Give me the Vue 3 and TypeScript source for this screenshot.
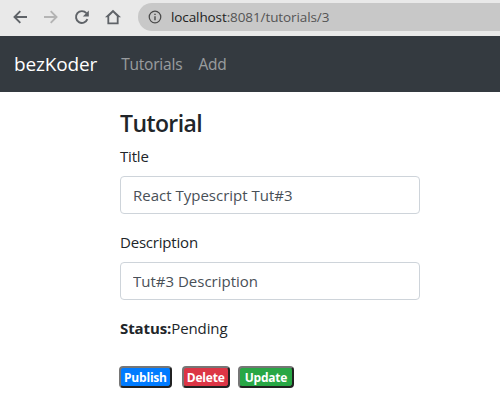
<script setup lang="ts">
const title: string = "React Typescript Tut#3";
const description: string = "Tut#3 Description";
</script>

<template>
  <div class="page">
    <div class="chrome">
      <div class="tools">
        <svg class="ico" viewBox="0 0 16 16"><path d="M15 8H2.5M8.3 2.2 2.5 8l5.8 5.8" fill="none" stroke="#5f6368" stroke-width="1.9" /></svg>
        <svg class="ico" viewBox="0 0 16 16"><path d="M1 8h12.5M7.7 2.2 13.5 8l-5.8 5.8" fill="none" stroke="#b4b4b4" stroke-width="1.9" /></svg>
        <svg class="ico" viewBox="0 0 16 16"><path d="M13.4 10.2A5.9 5.9 0 1 1 12.4 4.2" fill="none" stroke="#5f6368" stroke-width="1.9" /><path d="M14.8 1.4v6H8.8z" fill="#5f6368" /></svg>
        <svg class="ico" viewBox="0 0 16 16"><path d="M8 .8 0 8.2h2.4v7h11.2v-7H16zM4.2 13.4V7.2L8 3.6l3.8 3.6v6.2z" fill="#5f6368" fill-rule="evenodd" /></svg>
      </div>
      <div class="omni">
        <svg class="info" viewBox="0 0 16 16"><circle cx="8" cy="8" r="6.6" fill="none" stroke="#4a4a4a" stroke-width="1.4" /><path d="M7.2 7h1.6v4.8H7.2zM7.2 4.2h1.6v1.6H7.2z" fill="#4a4a4a" /></svg>
        <span class="url"><span class="host">localhost</span>:8081/tutorials/3</span>
      </div>
    </div>
    <nav class="navbar">
      <a class="brand">bezKoder</a>
      <a class="link">Tutorials</a>
      <a class="link">Add</a>
    </nav>
    <main class="content">
      <h4 class="heading">Tutorial</h4>
      <form class="form" @submit.prevent>
        <div class="group">
          <label class="label" for="title">Title</label>
          <input id="title" class="input" type="text" :value="title" />
        </div>
        <div class="group">
          <label class="label" for="description">Description</label>
          <input id="description" class="input" type="text" :value="description" />
        </div>
        <div class="status"><strong>Status:</strong>Pending</div>
      </form>
      <div class="actions">
        <button class="badge primary" type="button">Publish</button>
        <button class="badge danger" type="button">Delete</button>
        <button class="badge success" type="button">Update</button>
      </div>
    </main>
  </div>
</template>

<style>
html, body { margin: 0; background: #fff; }
</style>

<style scoped>
.page {
  width: 500px;
  height: 410px;
  overflow: hidden;
  font-family: "Open Sans", "Noto Sans", sans-serif;
  color: #212529;
}
.chrome {
  height: 36px;
  box-sizing: border-box;
  padding-top: 3px;
  display: flex;
  background: #e9e9e9;
}
.tools {
  width: 138px;
  height: 28px;
  display: flex;
  align-items: center;
  gap: 15px;
  padding-left: 12px;
  box-sizing: border-box;
}
.ico { width: 16px; height: 16px; flex: none; }
.omni {
  flex: 1;
  height: 28px;
  background: #c8c8c8;
  border-radius: 14px 0 0 14px;
  display: flex;
  align-items: center;
  gap: 9px;
  padding-left: 10px;
}
.info { width: 14px; height: 14px; }
.url { font-size: 13.5px; color: #555; letter-spacing: -0.1px; }
.host { color: #222; }
.navbar {
  height: 56px;
  background: #343a40;
  display: flex;
  align-items: center;
  padding-left: 14px;
}
.brand { font-size: 19px; color: #fff; margin-right: 24px; letter-spacing: -0.15px; }
.link { font-size: 15.5px; color: rgba(255, 255, 255, 0.5); margin-right: 16px; letter-spacing: -0.2px; }
.content {
  width: 300px;
  margin-left: 120px;
}
.heading {
  margin: 0 0 6px;
  padding-top: 16px;
  font-size: 23px;
  line-height: 30px;
  font-weight: 600;
  letter-spacing: -0.6px;
}
.form { display: block; }
.group { margin-bottom: 16px; }
.label {
  display: block;
  font-size: 15px;
  line-height: 24px;
  margin-bottom: 8px;
  letter-spacing: -0.2px;
}
.input {
  display: block;
  width: 100%;
  height: 38px;
  box-sizing: border-box;
  padding: 6px 12px;
  font: inherit;
  font-size: 15px;
  color: #495057;
  border: 1px solid #ced4da;
  border-radius: 4px;
  background: #fff;
}
.status {
  font-size: 15px;
  line-height: 24px;
  margin-top: 16px;
  letter-spacing: -0.1px;
}
.actions {
  margin: 26px 0 0 -1px;
  display: flex;
  gap: 8px;
}
.badge {
  height: 22px;
  padding: 0 3px;
  font: inherit;
  font-size: 12px;
  font-weight: 700;
  letter-spacing: -0.2px;
  color: #fff;
  border: 2px outset #767676;
  border-radius: 4px;
  box-sizing: border-box;
}
.primary { background: #007bff; margin-right: 2px; }
.danger { background: #dc3545; }
.success { background: #28a745; padding: 0 5px; }
</style>
